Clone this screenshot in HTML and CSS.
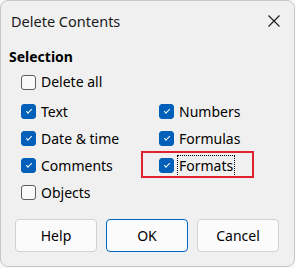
FILE: index.html
```html
<!DOCTYPE html>
<html>
<head>
<meta charset="utf-8">
<link rel="stylesheet" href="styles.css">
</head>
<body>
<div class="window">
  <div class="titlebar">
    <span class="title">Delete Contents</span>
    <span class="close">
      <svg width="12" height="12" viewBox="0 0 12 12"><path d="M0.5 0.5 L11.5 11.5 M11.5 0.5 L0.5 11.5" stroke="#1a1a1a" stroke-width="1.1" fill="none"/></svg>
    </span>
  </div>
  <div class="content">
    <div class="heading">Selection</div>
    <div class="options">
      <label class="check single"><span class="box"></span><span class="label">Delete all</span></label>
      <div class="grid">
        <label class="check"><span class="box on"></span><span class="label">Text</span></label>
        <label class="check"><span class="box on"></span><span class="label">Numbers</span></label>
        <label class="check"><span class="box on"></span><span class="label">Date &amp; time</span></label>
        <label class="check"><span class="box on"></span><span class="label">Formulas</span></label>
        <label class="check"><span class="box on"></span><span class="label">Comments</span></label>
        <label class="check marked"><span class="box on"></span><span class="label focus">Formats</span><span class="highlight"></span></label>
        <label class="check"><span class="box"></span><span class="label">Objects</span></label>
      </div>
    </div>
    <div class="buttons">
      <button class="btn">Help</button>
      <button class="btn default">OK</button>
      <button class="btn">Cancel</button>
    </div>
  </div>
</div>
</body>
</html>
```
FILE: styles.css
```css
html, body {
  margin: 0;
  padding: 0;
  background: #f7f7f7;
}
body {
  font-family: "Noto Sans", "Open Sans", sans-serif;
  color: #000;
}
.window {
  width: 295px;
  height: 267px;
  box-sizing: border-box;
  border: 1px solid #c6c6c6;
  border-radius: 8px;
  background: #f0f0f0;
  display: flex;
  flex-direction: column;
  overflow: hidden;
}
.titlebar {
  height: 39px;
  display: flex;
  align-items: center;
  justify-content: space-between;
  padding: 0 14px 0 10px;
  flex: none;
}
.title {
  font-size: 14.5px;
  color: #1a1a1a;
}
.close {
  display: flex;
  width: 12px;
  height: 12px;
}
.content {
  display: flex;
  flex-direction: column;
  padding: 7px 15px 0 8px;
}
.heading {
  font-weight: bold;
  font-size: 14px;
  line-height: 20px;
}
.options {
  padding-left: 12px;
  margin-top: 2px;
}
.check {
  display: flex;
  align-items: center;
  height: 27px;
  font-size: 14px;
  position: relative;
}
.single {
  height: 26px;
  margin-bottom: 3px;
}
.grid {
  display: grid;
  grid-template-columns: 138px 1fr;
}
.box {
  width: 13px;
  height: 13px;
  border: 1px solid #5e5e5e;
  border-radius: 3px;
  background: #f9f9f9;
  margin-right: 5px;
  flex: none;
  position: relative;
}
.box.on {
  background: #005fb8;
  border-color: #005fb8;
}
.box.on::after {
  content: "";
  position: absolute;
  left: 4px;
  top: 4px;
  width: 5px;
  height: 2px;
  border-left: 1px solid #fff;
  border-bottom: 1px solid #fff;
  transform: rotate(-45deg);
}
.label {
  line-height: 20px;
  padding: 0 1px;
  border: 1px solid transparent;
  margin-left: -2px;
}
.focus {
  border: 1px dotted #000;
}
.highlight {
  position: absolute;
  left: -18px;
  top: -1px;
  width: 109px;
  height: 23px;
  border: 2px solid #e0212f;
}
.buttons {
  display: flex;
  gap: 9px;
  margin-top: 13px;
  padding-left: 6px;
}
.btn {
  width: 82px;
  height: 33px;
  box-sizing: border-box;
  border: 1px solid #d2d2d2;
  border-radius: 4px;
  background: #fbfbfb;
  font-family: "Noto Sans", "Open Sans", sans-serif;
  font-size: 14px;
  color: #000;
  padding: 0;
}
.btn.default {
  border-color: #0067c0;
}
```
